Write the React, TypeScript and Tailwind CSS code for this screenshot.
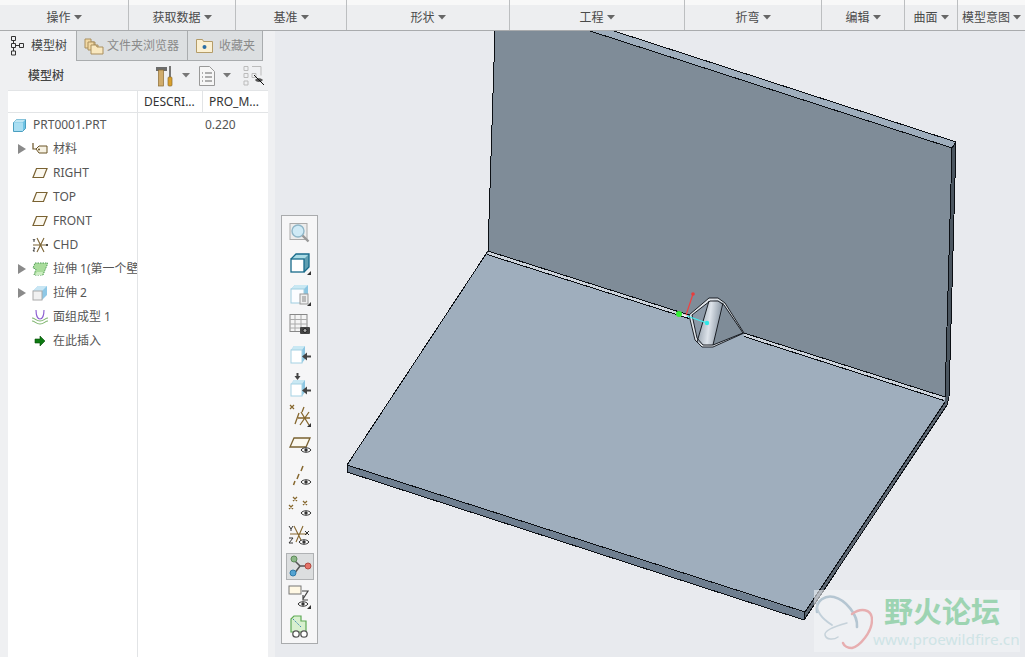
import React from "react";

const FONT = '"Noto Sans","Noto Sans CJK SC",sans-serif';

const menus: [string, string][] = [
  ["操作", "w-[129px]"],
  ["获取数据", "w-[107px]"],
  ["基准", "w-[111px]"],
  ["形状", "w-[163px]"],
  ["工程", "w-[175px]"],
  ["折弯", "w-[137px]"],
  ["编辑", "w-[83px]"],
  ["曲面", "w-[53px]"],
  ["模型意图", "w-[67px]"],
];

const Caret = ({ c = "#666" }: { c?: string }) => (
  <svg width="8" height="5" viewBox="0 0 8 5" className="shrink-0">
    <path d="M0 0h8L4 4.5z" fill={c} />
  </svg>
);

const Ico = ({ w = 18, h = 18, children }: { w?: number; h?: number; children: React.ReactNode }) => (
  <svg width={w} height={h} viewBox={`0 0 ${w} ${h}`} className="shrink-0">
    {children}
  </svg>
);

const Plane = () => (
  <Ico w={16} h={12}>
    <path d="M4.5 1.5H15L11.5 10.5H1z" fill="#fbf8ef" stroke="#7a6232" strokeWidth="1.2" />
  </Ico>
);

const rows: { label: string; arrow?: boolean; icon: React.ReactNode }[] = [
  {
    label: "材料",
    arrow: true,
    icon: (
      <Ico w={16} h={14}>
        <path d="M1 1v6h3" fill="none" stroke="#6b5426" strokeWidth="1.2" />
        <path d="M4 7l3-3h8v7H7z" fill="#f6f1e2" stroke="#6b5426" />
        <circle cx="7" cy="7.5" r="1" fill="#6b5426" />
      </Ico>
    ),
  },
  { label: "RIGHT", icon: <Plane /> },
  { label: "TOP", icon: <Plane /> },
  { label: "FRONT", icon: <Plane /> },
  {
    label: "CHD",
    icon: (
      <Ico w={17} h={16}>
        <path d="M5 1l7 14M12 1L5 15M1 8h13" stroke="#7a6232" strokeWidth="1.1" fill="none" />
        <path d="M1 2l1 1.5L3 2M2 3.5V5M1 11h2l-2 3h2M14 7l2 2M16 7l-2 2" stroke="#333" strokeWidth="0.9" fill="none" />
      </Ico>
    ),
  },
  {
    label: "拉伸 1(第一个壁",
    arrow: true,
    icon: (
      <Ico w={16} h={14}>
        <path d="M3 1h13l-3 7-2 5H2l2-6-3-1z" fill="#a9dc9c" stroke="#4f9a55" strokeDasharray="1.5 1" />
        <path d="M5 10h6l-1 3H3z" fill="#cdeec3" />
      </Ico>
    ),
  },
  {
    label: "拉伸 2",
    arrow: true,
    icon: (
      <Ico w={16} h={16}>
        <path d="M1 6l5-5h9v9l-5 5z" fill="#8fc8e6" />
        <path d="M1 6l5-5h9l-5 5z" fill="#c8e6f4" />
        <rect x="1" y="6" width="9" height="9" fill="#f1f1f1" stroke="#aaa" />
      </Ico>
    ),
  },
  {
    label: "面组成型 1",
    icon: (
      <Ico w={16} h={15}>
        <path d="M4 0c0 6 2 9 4 9s4-3 4-9" fill="none" stroke="#8a5bd0" strokeWidth="1.1" />
        <path d="M0 8c3 0 4 3 8 3s5-3 8-3M0 11c3 0 4 3 8 3s5-3 8-3" fill="none" stroke="#7fb56f" strokeWidth="1.1" />
      </Ico>
    ),
  },
  {
    label: "在此插入",
    icon: (
      <Ico w={16} h={12}>
        <path d="M3 4h5V1l5 5-5 5V8H3z" fill="#0d7a12" stroke="#064d09" strokeWidth="0.6" />
      </Ico>
    ),
  },
];

const Tri = () => (
  <svg width="8" height="10" viewBox="0 0 8 10" className="shrink-0">
    <path d="M0 0l8 5-8 5z" fill="#8a8a8a" />
  </svg>
);

const Corner = () => <path d="M23 24h-4l4-4z" fill="#333" />;
const Eye = ({ x, y }: { x: number; y: number }) => (
  <g transform={`translate(${x} ${y})`}>
    <path d="M0 3c2-3 8-3 10 0-2 3-8 3-10 0z" fill="#fff" stroke="#333" />
    <circle cx="5" cy="3" r="1.7" fill="#333" />
  </g>
);

const tools: React.ReactNode[] = [
  <g key="a">
    <rect x="2" y="2.5" width="17" height="16" fill="#ececec" stroke="#aaa" />
    <circle cx="10" cy="10" r="6" fill="#cfeaf6" stroke="#8fb6c8" strokeWidth="1.4" />
    <path d="M14.5 14.5l6 6" stroke="#999" strokeWidth="2.4" />
  </g>,
  <g key="b">
    <path d="M3 8l5-5h13v13l-5 5z" fill="#5f9fb2" />
    <path d="M3 8l5-5h13l-5 5z" fill="#a9dbe6" />
    <rect x="3" y="8" width="13" height="13" fill="#fff" stroke="#176a8a" strokeWidth="1.3" />
    <path d="M3 8l5-5h13v13l-5 5" fill="none" stroke="#176a8a" strokeWidth="1.3" />
    <Corner />
  </g>,
  <g key="c">
    <path d="M3 7l4-4h13v14l-4 4z" fill="#8cc6e2" />
    <path d="M3 7l4-4h13l-4 4z" fill="#c9e8f3" />
    <rect x="3" y="7" width="13" height="14" fill="#fbfdff" stroke="#9fcde0" />
    <rect x="12" y="12" width="8" height="10" fill="#eee" stroke="#999" />
    <path d="M14 15h4M14 17h4M14 19h4" stroke="#888" />
    <Corner />
  </g>,
  <g key="d">
    <rect x="2" y="2.5" width="17" height="17" fill="#f4f4f4" stroke="#888" />
    <path d="M2 7.5h17M2 12h17M2 16h17M7 3v16M13 3v16" stroke="#aaa" />
    <rect x="12" y="15" width="10" height="7" rx="1" fill="#444" />
    <circle cx="17" cy="18.5" r="2" fill="#aaa" stroke="#222" />
  </g>,
  <g key="e">
    <path d="M3 8l3-4h11v13l-3 4z" fill="#8cc6e2" />
    <path d="M3 8l3-4h11l-3 4z" fill="#c9e8f3" />
    <rect x="3" y="8" width="11" height="13" fill="#fff" stroke="#a5d2e4" />
    <path d="M14 14.500l5-4v3h4v2h-4v3z" fill="#444" />
  </g>,
  <g key="f">
    <path d="M3 11l3-4h11v12l-3 4z" fill="#8cc6e2" />
    <path d="M3 11l3-4h11l-3 4z" fill="#c9e8f3" />
    <rect x="3" y="11" width="11" height="12" fill="#fff" stroke="#a5d2e4" />
    <path d="M14 17.500l5-4v3h4v2h-4v3zM9.500 7l-3-4h2V0h2v3h2z" fill="#444" />
  </g>,
  <g key="g">
    <path d="M11 10L7 21M16 4l-2 5M21 9L12 22M13 9l8 13M10 15h12" stroke="#86672e" strokeWidth="1.3" fill="none" />
    <path d="M2 2l4 4M6 2L2 6" stroke="#86672e" strokeWidth="1.2" />
    <Corner />
  </g>,
  <g key="h" transform="translate(0 1)">
    <path d="M6 4h16l-4 9H2z" fill="#fbf8ef" stroke="#7a6232" strokeWidth="1.3" />
    <Eye x={13} y={13} />
  </g>,
  <g key="i">
    <path d="M15 2l-2 5M11 10l-2 5M7 17l-1.500 4" stroke="#86672e" strokeWidth="1.5" />
    <Eye x={13} y={15} />
  </g>,
  <g key="j">
    <path d="M5 3l4 4M9 3L5 7M15 7l4 4M19 7l-4 4M1 11l4 4M5 11l-4 4" stroke="#86672e" strokeWidth="1.2" />
    <Eye x={13} y={16} />
  </g>,
  <g key="k">
    <path d="M6 2l8 16M15 2L8 18M2 10h17" stroke="#86672e" strokeWidth="1.1" fill="none" />
    <path d="M1 2l2 3 2-3M3 5v2M1 14h4l-4 5h4M17 7l4 4M21 7l-4 4" stroke="#333" strokeWidth="1" fill="none" />
    <Eye x={11} y={15} />
  </g>,
  <g key="l">
    <path d="M6 6l6 6 8 0M6 20l6-8" stroke="#555" strokeWidth="1.5" fill="none" />
    <circle cx="6" cy="5" r="3" fill="#8db889" stroke="#5d8a59" />
    <circle cx="20" cy="12" r="3" fill="#e57369" stroke="#b24c42" />
    <circle cx="5" cy="19" r="3" fill="#53a3d2" stroke="#2e7aa8" />
  </g>,
  <g key="m">
    <rect x="1" y="1" width="12" height="8" fill="#fff8e4" stroke="#777" />
    <path d="M14 6h6l-5 8m0-4v5h5" fill="none" stroke="#444" strokeWidth="1.2" />
    <Eye x={10} y={16} />
    <Corner />
  </g>,
  <g key="n">
    <path d="M3 4l3-3h7v5h5v11H3z" fill="#d8f0cf" stroke="#5eaa55" strokeWidth="1.2" />
    <path d="M5 4l8 8" stroke="#3b86b0" strokeDasharray="1.500 1" />
    <circle cx="8" cy="19" r="3.200" fill="#fff" stroke="#555" strokeWidth="1.300" />
    <circle cx="16" cy="19" r="3.200" fill="#fff" stroke="#555" strokeWidth="1.300" />
  </g>,
];

const Model = () => (
  <svg viewBox="275 31 750 626" width="750" height="626" className="absolute inset-0">
    <defs>
      <linearGradient id="cyl" x1="0" y1="0" x2="1" y2="0.2">
        <stop offset="0" stopColor="#7f8c9a" />
        <stop offset="0.55" stopColor="#dde3ea" />
        <stop offset="1" stopColor="#84919f" />
      </linearGradient>
    </defs>
    {/* front and side faces */}
    <path d="M347 465V472L804 620 946 407 949 397 804 612z" fill="#6f7f90" />
    <path d="M804 620L946 407 949 397 944 401 805 612z" fill="#5e6873" />
    {/* floor */}
    <path d="M488 251L947 398 805 612 347 465z" fill="#9faebd" />
    {/* wall */}
    <path d="M495 31H590L952 148 945 398 488 251z" fill="#7f8c98" />
    {/* top strip */}
    <path d="M590 31H614L956 142 952 148z" fill="#9faebd" />
    {/* wall side */}
    <path d="M952 148L956 142 949 397 945 403z" fill="#4b5660" />
    <g shapeRendering="crispEdges" stroke="#0b0f14" strokeWidth="1" fill="none">
      <path d="M590 31L952 148 956 142 M614 31L956 142 949 397 M952 148L945 398" />
      <path d="M495 31L488 251 347 465V472L804 620 947 405 949 397" />
      <path d="M347 465L805 612 945 402 M804 612V620" />
    </g>
    {/* bend strip */}
    <path d="M488 251L689 315 689 318.500 487 254.500zM744 333L945 397 944 400.500 744 336.500z" fill="#cdd4dc" />
    <g shapeRendering="crispEdges" stroke="#0b0f14" strokeWidth="1" fill="none">
      <path d="M488 251L689 315M487 254.500L689 318.500M744 333L945 397M744 336.500L944 400.500" />
    </g>
    {/* bump */}
    <path d="M689 315L709 298H718L725 303 744 333 713 347H702L695 340z" fill="#dfe4e9" />
    <path d="M692 315L710 301H718L724 305 743 333 713 345H703L697 338z" fill="#8c99a7" />
    <path d="M724 305L743 333 713 345z" fill="#7f8c98" />
    <path d="M709 301Q716 297 723 303L713 345Q705 347 697 342z" fill="url(#cyl)" />
    <g stroke="#0b0f14" strokeWidth="0.900" fill="none">
      <path d="M689 315L709 298H718L725 303 744 333 713 347H702L695 340z" />
      <path d="M692 315L710 301H718L724 305 743 333 713 345H703L697 338z" />
      <path d="M709 301L697 342M723 303L713 345" />
    </g>
    {/* datum markers */}
    <path d="M686 315L693 294" stroke="#f24040" strokeWidth="1.200" />
    <circle cx="693" cy="294" r="1.800" fill="#e83c3c" />
    <path d="M682 315L687 316.500" stroke="#ffffff" strokeWidth="1.300" />
    <path d="M687 316L707 323" stroke="#40f0f0" strokeWidth="1.300" />
    <circle cx="707" cy="323" r="2.200" fill="#30e8e8" />
    <circle cx="679" cy="314" r="3" fill="#35ee35" />
  </svg>
);

const Watermark = () => (
  <div
    className="absolute left-[539px] top-[559px] w-[206px] h-[62px] bg-[#f1f3f6]/60 flex"
    style={{ fontFamily: FONT }}
  >
    <svg width="59" height="62" viewBox="0 0 59 62" className="shrink-0">
      <g fill="none" strokeLinecap="round">
        <path d="M3 22C1 10 12 5 20 7C32 10 44 25 43 37" stroke="#b5c6d2" strokeWidth="2.600" />
        <path d="M3 13C2 22 10 30 18 35" stroke="#c2d0da" strokeWidth="1.800" />
        <path d="M33 33C22 36 10 40 11 45C12 50 20 50 24 47" stroke="#c6d2da" strokeWidth="1.500" />
        <path d="M38 24C46 18 58 18 58 30C58 42 46 56 38 58C34 58 30 56 29 53" stroke="#e7aeb0" strokeWidth="2.400" />
      </g>
    </svg>
    <div className="flex flex-col items-start">
      <div
        className="mt-[6px] pl-[11px] text-[29px] leading-[29px] font-bold text-[#9dd4b2] whitespace-nowrap"
        style={{ fontFamily: '"Noto Sans CJK SC",sans-serif' }}
      >
        野火论坛
      </div>
      <div className="mt-[5px] text-[15.300px] leading-[18px] text-[#cfe4e6] whitespace-nowrap">
        www.proewildfire.cn
      </div>
    </div>
  </div>
);

export default function App() {
  return (
    <div
      className="w-[1025px] h-[657px] overflow-hidden flex flex-col bg-[#e8eaee] text-[12px] text-[#555]"
      style={{ fontFamily: FONT }}
    >
      {/* top ribbon */}
      <div className="h-[31px] shrink-0 flex border-b border-[#a9abad] bg-[linear-gradient(#f8f8f8_0,#f8f8f8_5px,#edeef0_5px)]">
        {menus.map(([t, w]) => (
          <div
            key={t}
            className={`${w} shrink-0 flex items-center justify-center gap-[3px] pt-[5px] border-r border-[#bcbec0] last:border-r-0 text-[12px] text-[#4a4a4a]`}
          >
            <span>{t}</span>
            <Caret />
          </div>
        ))}
      </div>

      <div className="flex-1 flex min-h-0">
        {/* left panel */}
        <div className="w-[275px] shrink-0 flex flex-col bg-[#eff0f2]">
          {/* tabs */}
          <div className="h-[30px] shrink-0 flex items-stretch">
            <div className="w-[76px] shrink-0 flex items-center gap-[7px] pl-[11px]">
              <svg width="13" height="20" viewBox="0 0 13 20">
                <path d="M0.500 0.500h4v4h-4zM0.500 7.500h4v4h-4zM0.500 15h4v4h-4zM8.500 7.500h4v4h-4zM2.500 4.500v3M2.500 11.500v3.500M4.500 9.500h4" fill="none" stroke="#333" />
              </svg>
              <span className="text-[#444]">模型树</span>
            </div>
            <div className="w-[111px] shrink-0 flex items-center gap-[3px] pl-[7px] bg-[#dcdfe1] border-l border-b border-[#a9acae] text-[#8a8a8a]">
              <svg width="20" height="18" viewBox="0 0 20 18" className="shrink-0">
                <path d="M1 2h6v3h4v6H1z" fill="#f2d9a4" stroke="#a98f5f" />
                <path d="M4 5h6v3h4v5H4z" fill="#f2d9a4" stroke="#a98f5f" />
                <path d="M7 8h5l1 2h6v7H7z" fill="#f9e8bf" stroke="#a98f5f" />
              </svg>
              <span>文件夹浏览器</span>
            </div>
            <div className="w-[76px] shrink-0 flex items-center gap-[6px] pl-[8px] bg-[#dcdfe1] border-l border-r border-b border-[#a9acae] text-[#8a8a8a]">
              <svg width="17" height="15" viewBox="0 0 17 15" className="shrink-0">
                <path d="M0.500 1.500h6l1 2h9v11h-16z" fill="#fbf0d2" stroke="#b49c68" />
                <circle cx="8.500" cy="9" r="2" fill="#2c6fa5" />
              </svg>
              <span>收藏夹</span>
            </div>
          </div>
          {/* tree toolbar */}
          <div className="h-[29px] shrink-0 flex items-center pl-[28px]">
            <span className="w-[128px] font-medium text-[#444]">模型树</span>
            <svg width="20" height="22" viewBox="0 0 20 22" className="shrink-0">
              <path d="M0 2h11v4H0z" fill="#6b6b6b" />
              <rect x="2.500" y="5" width="5" height="16" fill="#d0ac6c" stroke="#8a6b32" strokeWidth="0.700" />
              <rect x="13" y="1" width="2" height="11" fill="#777" />
              <rect x="12" y="12" width="4" height="9" rx="1" fill="#d9a02c" stroke="#8a6b32" strokeWidth="0.700" />
            </svg>
            <div className="ml-[6px]">
              <Caret c="#777" />
            </div>
            <svg width="16" height="20" viewBox="0 0 16 20" className="ml-[9px] shrink-0">
              <path d="M0.500 0.500h10l5 5v14h-15z" fill="#f6f6f6" stroke="#999" />
              <path d="M3 7h1M6 7h7M3 11h1M6 11h7M3 15h1M6 15h7" stroke="#666" />
            </svg>
            <div className="ml-[8px]">
              <Caret c="#777" />
            </div>
            <svg width="22" height="20" viewBox="0 0 22 20" className="ml-[12px] shrink-0">
              <path d="M1 0.500h4v4H1zM1 7.500h4v4H1zM1 15h4v4H1zM9 7.500h4v4H9zM9 0.500h9v9" fill="none" stroke="#bbb" />
              <path d="M12 14c1.500-2.500 6-2.500 8 0-2 2.500-6.500 2.500-8 0z" fill="#555" />
              <path d="M11 9l10 10" stroke="#111" />
            </svg>
          </div>
          {/* table */}
          <div className="flex-1 ml-[8px] mr-[7px] bg-white flex flex-col min-h-0">
            <div className="h-[23px] shrink-0 flex border-t border-b border-[#e2e4e6] bg-white">
              <div className="w-[130px] border-r border-[#e2e4e6]" />
              <div className="w-[65px] border-r border-[#e2e4e6] pl-[6px] leading-[22px] text-[#333] whitespace-nowrap">DESCRI...</div>
              <div className="w-[65px] pl-[6px] leading-[22px] text-[#333] whitespace-nowrap">PRO_M...</div>
            </div>
            <div className="flex-1 flex">
              <div className="w-[130px] shrink-0 border-r border-[#e2e4e6] overflow-hidden">
                <div className="h-[24px] flex items-center pl-[5px] gap-[7px] whitespace-nowrap">
                  <svg width="13" height="13" viewBox="0 0 13 13" className="shrink-0">
                    <path d="M0.500 3.500l3-3h9v9l-3 3h-9z" fill="#6fc3e4" stroke="#4b9fc0" />
                    <path d="M0.500 3.500l3-3h9l-3 3z" fill="#bfe6f3" />
                    <rect x="1" y="4" width="9" height="8" fill="#a9def2" />
                  </svg>
                  <span>PRT0001.PRT</span>
                </div>
                {rows.map((r) => (
                  <div key={r.label} className="h-[24px] flex items-center whitespace-nowrap">
                    <div className="w-[24px] shrink-0 pl-[10px]">{r.arrow && <Tri />}</div>
                    <div className="w-[21px] shrink-0 flex justify-start">{r.icon}</div>
                    <span>{r.label}</span>
                  </div>
                ))}
              </div>
              <div className="w-[65px] shrink-0" />
              <div className="pl-[2px] h-[24px] leading-[24px]">0.220</div>
            </div>
          </div>
        </div>

        {/* viewport */}
        <div className="relative flex-1 bg-[#e8eaee] overflow-hidden">
          <Model />
          <Watermark />
          {/* floating toolbar */}
          <div className="absolute left-[6px] top-[184px] w-[37px] h-[429px] bg-[#f6f6f7] border border-[#a9abad] flex flex-col items-center pt-[2px]">
            {tools.map((t, i) => (
              <div key={i} className="h-[30.300px] w-full shrink-0 flex items-center justify-center">
                <div
                  className={
                    i === 11
                      ? "w-[28px] h-[27px] bg-[#dcdedf] border border-[#b0b2b4] flex items-center justify-center"
                      : "flex items-center justify-center"
                  }
                >
                  <svg width="24" height="24" viewBox="0 0 24 24">
                    {t}
                  </svg>
                </div>
              </div>
            ))}
          </div>
        </div>
      </div>
    </div>
  );
}
